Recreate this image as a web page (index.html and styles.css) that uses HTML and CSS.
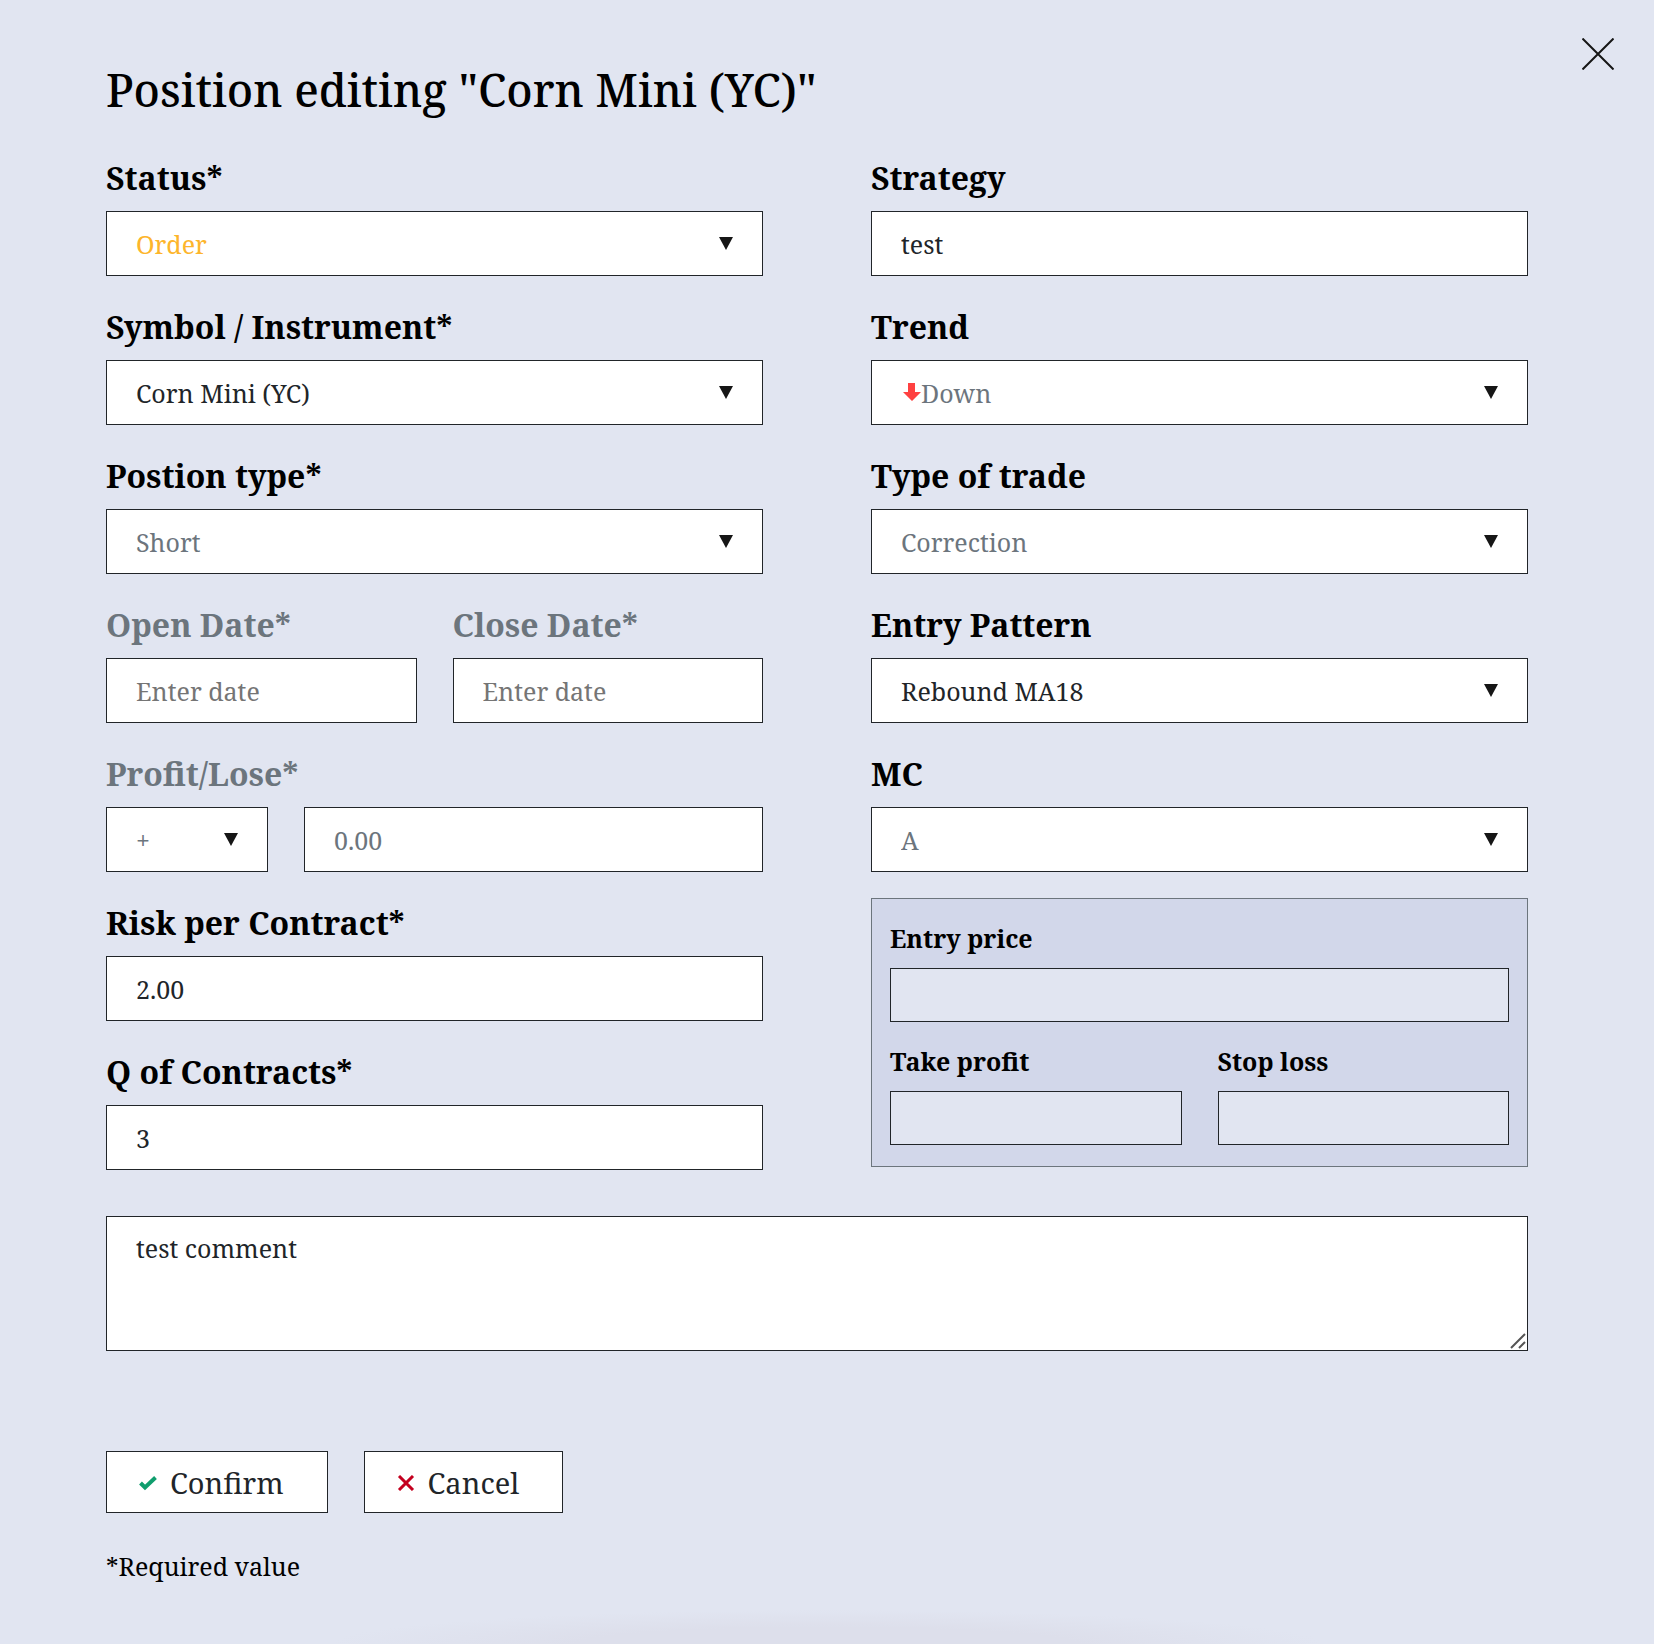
FILE: index.html
```html
<!DOCTYPE html>
<html lang="en">
<head>
<meta charset="utf-8">
<meta name="viewport" content="width=device-width, initial-scale=1">
<title>Position editing</title>
<link rel="stylesheet" href="styles.css">
</head>
<body>
<svg class="sprite" aria-hidden="true">
  <symbol id="caret" viewBox="0 0 14 13"><path d="M0 0h14L7 13z" fill="#161616"/></symbol>
</svg>
<main class="dialog">
  <button class="close" type="button" aria-label="Close">
    <svg width="32" height="32" viewBox="0 0 32 32"><path d="M0.500 0.500l31 31M31.500 0.500l-31 31" stroke="#161616" stroke-width="2" fill="none"/></svg>
  </button>
  <h1 class="title">Position editing "Corn Mini (YC)"</h1>
  <form class="form">
    <div class="columns">
      <div class="column">
        <div class="field">
          <label class="label" for="status">Status*</label>
          <div class="select"><select class="control order" id="status"><option>Order</option></select><svg class="caret"><use href="#caret"/></svg></div>
        </div>
        <div class="field">
          <label class="label" for="symbol">Symbol / Instrument*</label>
          <div class="select"><select class="control" id="symbol"><option>Corn Mini (YC)</option></select><svg class="caret"><use href="#caret"/></svg></div>
        </div>
        <div class="field">
          <label class="label" for="type">Postion type*</label>
          <div class="select"><select class="control muted" id="type"><option>Short</option></select><svg class="caret"><use href="#caret"/></svg></div>
        </div>
        <div class="pair">
          <div class="field">
            <label class="label muted" for="open">Open Date*</label>
            <input class="control" id="open" type="text" placeholder="Enter date">
          </div>
          <div class="field">
            <label class="label muted" for="close">Close Date*</label>
            <input class="control" id="close" type="text" placeholder="Enter date">
          </div>
        </div>
        <div class="field">
          <label class="label muted" for="profit">Profit/Lose*</label>
          <div class="signed">
            <div class="select"><select class="control muted" aria-label="Sign"><option>+</option></select><svg class="caret"><use href="#caret"/></svg></div>
            <input class="control muted" id="profit" type="text" value="0.00">
          </div>
        </div>
        <div class="field">
          <label class="label" for="risk">Risk per Contract*</label>
          <input class="control" id="risk" type="text" value="2.00">
        </div>
        <div class="field">
          <label class="label" for="quantity">Q of Contracts*</label>
          <input class="control" id="quantity" type="text" value="3">
        </div>
      </div>
      <div class="column">
        <div class="field">
          <label class="label" for="strategy">Strategy</label>
          <input class="control" id="strategy" type="text" value="test">
        </div>
        <div class="field">
          <label class="label" for="trend">Trend</label>
          <div class="select">
            <select class="control muted with-icon" id="trend"><option>Down</option></select>
            <svg class="trend-icon" viewBox="0 0 18 18"><path d="M5 0h7v9h6l-9 9-9-9h5z" fill="#ff4141"/></svg>
            <svg class="caret"><use href="#caret"/></svg>
          </div>
        </div>
        <div class="field">
          <label class="label" for="trade">Type of trade</label>
          <div class="select"><select class="control muted" id="trade"><option>Correction</option></select><svg class="caret"><use href="#caret"/></svg></div>
        </div>
        <div class="field">
          <label class="label" for="pattern">Entry Pattern</label>
          <div class="select"><select class="control" id="pattern"><option>Rebound MA18</option></select><svg class="caret"><use href="#caret"/></svg></div>
        </div>
        <div class="field">
          <label class="label" for="mc">MC</label>
          <div class="select"><select class="control muted" id="mc"><option>A</option></select><svg class="caret"><use href="#caret"/></svg></div>
        </div>
        <div class="prices">
          <div class="price">
            <label class="price-label" for="entry">Entry price</label>
            <input class="price-control" id="entry" type="text">
          </div>
          <div class="pair">
            <div class="price">
              <label class="price-label" for="take">Take profit</label>
              <input class="price-control" id="take" type="text">
            </div>
            <div class="price">
              <label class="price-label" for="stop">Stop loss</label>
              <input class="price-control" id="stop" type="text">
            </div>
          </div>
        </div>
      </div>
    </div>
    <div class="comment">
      <textarea class="control comment-text" rows="3" aria-label="Comment">test comment</textarea>
      <svg class="grip" viewBox="0 0 16 16"><path d="M1 15L15 1M9 15l6-6" stroke="#555" stroke-width="2" fill="none"/></svg>
    </div>
    <div class="actions">
      <button class="action" type="button"><svg class="action-icon" viewBox="0 0 18 16"><path d="M1.500 8l4.500 4.500L16.500 2.500" stroke="#109e6e" stroke-width="4" fill="none"/></svg>Confirm</button>
      <button class="action" type="button"><svg class="action-icon" viewBox="0 0 18 16"><path d="M2 1l14 14M16 1L2 15" stroke="#c4001f" stroke-width="3" fill="none"/></svg>Cancel</button>
    </div>
    <p class="note">*Required value</p>
  </form>
</main>
</body>
</html>
```
FILE: styles.css
```css
* {
  box-sizing: border-box;
}

body {
  margin: 0;
  background: #e1e5f1;
  color: #000;
  font-family: "Noto Serif", "DejaVu Serif Condensed", "DejaVu Serif", serif;
}

.sprite {
  display: none;
}

.dialog {
  position: relative;
  min-height: 100vh;
  padding: 60px 126px 56px 106px;
  background: radial-gradient(closest-side, #dddfeb 50%, #e1e5f1 100%) no-repeat 50% calc(100% + 34px) / 60% 68px;
}

.close {
  position: absolute;
  top: 38px;
  right: 40px;
  display: flex;
  padding: 0;
  border: 0;
  background: none;
}

.title {
  margin: 0 0 37px;
  font-size: 45px;
  font-weight: 500;
  line-height: 60px;
}

.columns {
  display: grid;
  grid-template-columns: 1fr 1fr;
  gap: 108px;
}

.column {
  display: flex;
  flex-direction: column;
  gap: 30px;
}

.label {
  display: block;
  margin-bottom: 12px;
  font-size: 32px;
  font-weight: 700;
  line-height: 42px;
}

.control {
  display: block;
  width: 100%;
  height: 65px;
  margin: 0;
  padding: 0 29px;
  border: 1px solid #212529;
  border-radius: 0;
  background: #fff;
  color: #212529;
  font-family: inherit;
  font-size: 25px;
  appearance: none;
}

.control::placeholder {
  color: #757575;
}

.muted {
  color: #6c757d;
}

.order {
  color: #fdb52b;
}

.select {
  position: relative;
}

.caret {
  position: absolute;
  top: 26px;
  right: 30px;
  width: 14px;
  height: 13px;
  pointer-events: none;
}

.with-icon {
  padding-left: 49px;
}

.trend-icon {
  position: absolute;
  top: 23px;
  left: 32px;
  width: 18px;
  height: 18px;
}

.pair {
  display: grid;
  grid-template-columns: 1fr 1fr;
  gap: 36px;
}

.signed {
  display: grid;
  grid-template-columns: 162px 1fr;
  gap: 36px;
}

.prices {
  display: flex;
  flex-direction: column;
  gap: 22px;
  margin-top: -4px;
  padding: 22px 18px 21px;
  border: 1px solid #6c757d;
  background: #d2d7ea;
}

.price-label {
  display: block;
  margin-bottom: 12px;
  font-size: 25px;
  font-weight: 700;
  line-height: 35px;
}

.price-control {
  display: block;
  width: 100%;
  height: 54px;
  padding: 0 16px;
  border: 1px solid #212529;
  border-radius: 0;
  background: #e1e5f1;
  font: inherit;
}

.comment {
  position: relative;
  margin-top: 46px;
}

.comment-text {
  height: 135px;
  padding-top: 13px;
  line-height: 36px;
  resize: none;
}

.grip {
  position: absolute;
  right: 2px;
  bottom: 2px;
  width: 16px;
  height: 16px;
}

.actions {
  display: flex;
  gap: 36px;
  margin-top: 100px;
}

.action {
  display: flex;
  align-items: center;
  gap: 13px;
  height: 62px;
  padding: 0 43px 0 32px;
  border: 1px solid #212529;
  border-radius: 0;
  background: #fff;
  color: #212529;
  font-family: inherit;
  font-size: 29px;
}

.action-icon {
  width: 18px;
  height: 16px;
  margin-top: 2px;
}

.note {
  margin: 35px 0 0;
  font-size: 25px;
  line-height: 36px;
}
```
